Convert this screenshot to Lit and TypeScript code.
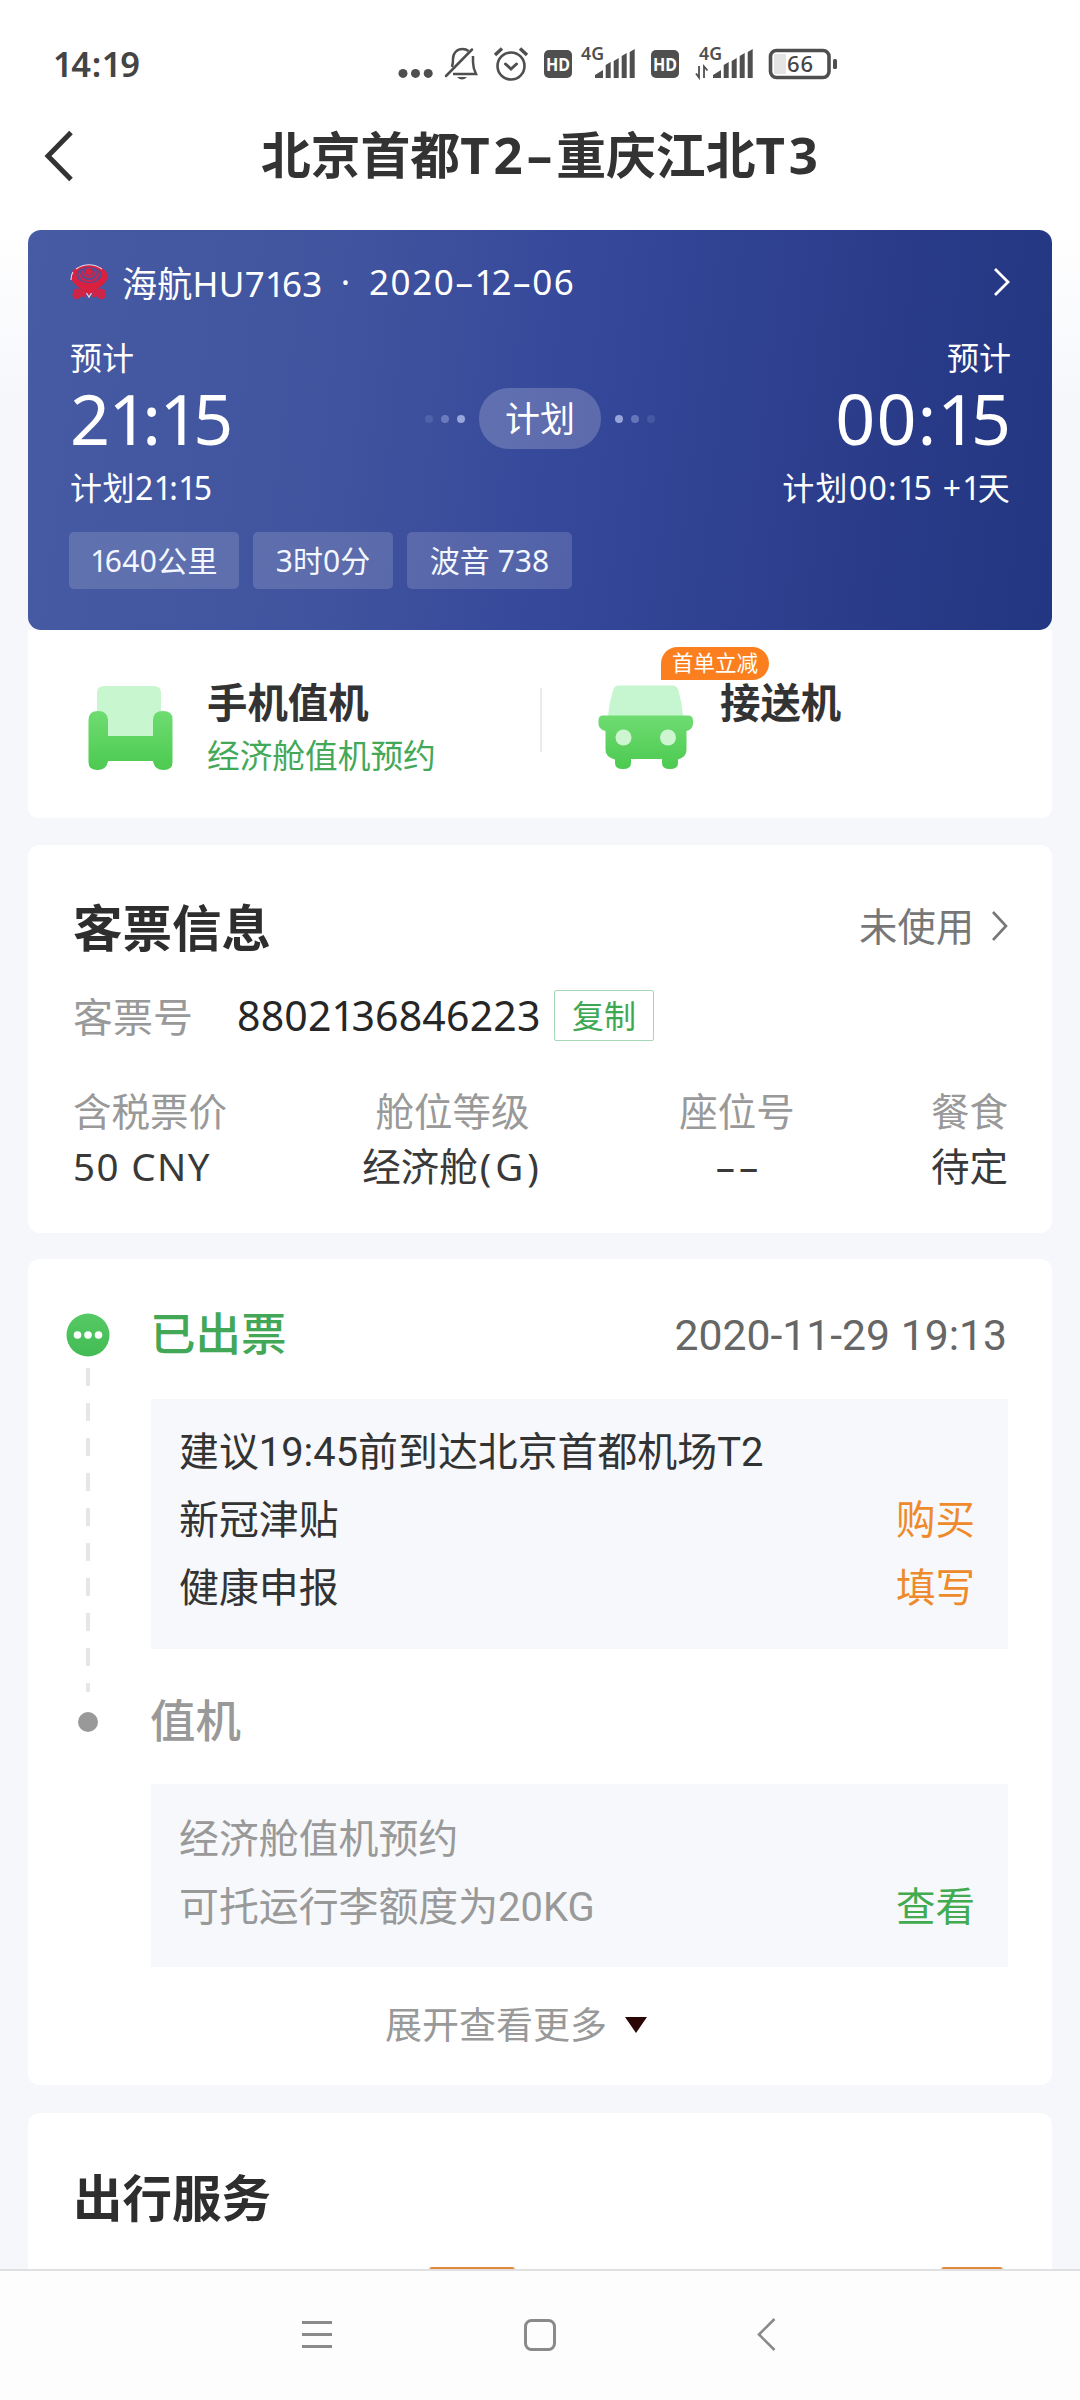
import { LitElement, html, svg, css } from "lit";
import { customElement, property } from "lit/decorators.js";

/** Digits are proportional in this design: the "1" takes less room than the others. */
const num = (text: string) =>
  text.split(/(1)/).filter((s) => s !== "").map((s) => (s === "1" ? html`<span class="one">1</span>` : s));

const shared = css`
  :host {
    display: block;
    box-sizing: border-box;
  }
  *,
  *::before,
  *::after {
    box-sizing: border-box;
  }
  .one {
    letter-spacing: -0.09em;
  }
  svg {
    display: block;
    flex: none;
  }
`;

@customElement("status-bar")
class StatusBar extends LitElement {
  static styles = [
    shared,
    css`
      :host {
        height: 108px;
        padding: 40px 0 0 53px;
        display: flex;
      }
      .time {
        width: 345px;
        font-size: 34.500px;
        line-height: 48px;
        font-weight: 600;
        color: #444;
        letter-spacing: 0.6px;
        white-space: nowrap;
      }
      .time .one {
        letter-spacing: -1.400px;
      }
      .t {
        font-family: "Noto Sans", sans-serif;
      }
    `,
  ];

  private bars(x: number) {
    return svg`<path fill="#4f4f4f" d="M${x} 38v-3l8-5v8zM${x + 10.7} 38V${25}l5-3V38zM${x + 18.7} 38V${21}l5-3V38zM${x + 26.7} 38V${16}l5-3V38zM${x + 34.7} 38V${12}l5-3V38z"/>`;
  }

  private hd(x: number) {
    return svg`<rect x=${x} y="10" width="28" height="28" rx="5" fill="#4f4f4f"/>
      <text class="t" x=${x + 14} y="31" text-anchor="middle" font-size="18" font-weight="700" fill="#fff" textLength="24" lengthAdjust="spacingAndGlyphs">HD</text>`;
  }

  private lte(x: number) {
    return svg`<text class="t" x=${x} y="19.500" font-size="17" font-weight="600" fill="#4f4f4f" textLength="23" lengthAdjust="spacingAndGlyphs">4G</text>`;
  }

  render() {
    return html`<div class="time">${num("14:19")}</div>
      <svg width="450" height="48" viewBox="0 0 450 48">
        <g fill="#4f4f4f"><circle cx="5" cy="33.4" r="4.5" /><circle cx="17.5" cy="33.4" r="4.5" /><circle cx="30.2" cy="33.4" r="4.5" /></g>
        <g fill="none" stroke="#4f4f4f" stroke-width="2.5">
          <path d="M54 27C55 24 55 22 55 19c0-6 4-10 9.500-10 2.500 0 4.500.7 6 2M75 16v6c0 5 1 8 3 12H55" />
          <path d="M48 36L74 9.500" stroke-linecap="round" />
        </g>
        <path fill="#4f4f4f" d="M59 37h10q-5 5-10 0z" />
        <g fill="none" stroke="#4f4f4f" stroke-width="2.600" stroke-linecap="round">
          <circle cx="113" cy="26" r="13.500" />
          <path d="M107.500 24l5.500 5 5.500-5" stroke-width="3" />
          <path d="M97 15l7-6.500M129 15l-7-6.500" stroke-width="3.400" stroke-linecap="butt" />
        </g>
        ${this.hd(146)} ${this.hd(253)} ${this.lte(183)} ${this.lte(301)} ${this.bars(197)} ${this.bars(315)}
        <path d="M301 26v11.500l-3-4M306 38V26.500l3.500 4" fill="none" stroke="#4f4f4f" stroke-width="1.800" />
        <rect x="372.500" y="10.500" width="58.500" height="27" rx="6" fill="#fff" stroke="#4f4f4f" stroke-width="3.600" />
        <rect x="376" y="14" width="12" height="20" fill="#e4e4e4" />
        <rect x="435" y="19" width="4" height="10" rx="1.500" fill="#4f4f4f" />
        <text class="t" x="402" y="32" text-anchor="middle" font-size="22" font-weight="500" fill="#444" textLength="26">66</text>
      </svg>`;
  }
}

@customElement("flight-card")
class FlightCard extends LitElement {
  static styles = [
    shared,
    css`
      :host {
        height: 400px;
        border-radius: 13px;
        padding: 31px 41px 0 41px;
        background: linear-gradient(97deg, #475ba4 0%, #40539e 32%, #36489a 52%, #2b3d8b 78%, #233681 100%);
        color: #fff;
        white-space: nowrap;
      }
      .head {
        display: flex;
        align-items: center;
        height: 43px;
        font-size: 35px;
      }
      .head svg {
        margin-top: -1px;
      }
      .head span {
        margin-top: -2px;
      }
      .head span.one {
        margin-top: 0;
      }
      .code {
        margin-left: 12px;
        width: 200px;
        letter-spacing: 0.3px;
      }
      .sep {
        width: 47px;
        text-align: center;
      }
      .date {
        flex: 1;
        letter-spacing: 1.600px;
      }
      .body {
        display: flex;
        justify-content: space-between;
        margin-top: 32px;
        height: 187px;
      }
      .side {
        width: 300px;
        display: flex;
        flex-direction: column;
        font-size: 32px;
        padding-left: 1px;
      }
      .side.end {
        align-items: flex-end;
        padding-left: 0;
      }
      .sched {
        letter-spacing: 0.5px;
      }
      .end .sched {
        letter-spacing: 1.3px;
      }
      .small {
        line-height: 44px;
      }
      .big {
        font-size: 70px;
        line-height: 72px;
        font-weight: 400;
        letter-spacing: -1.600px;
        margin: 2px 0 12px;
      }
      .end .big {
        letter-spacing: 1px;
        margin-right: -1px;
      }
      .mid {
        display: flex;
        align-items: center;
        gap: 14px;
        height: 61px;
        margin-top: 52px;
      }
      .dots {
        display: flex;
        gap: 8px;
      }
      .dots i {
        width: 8px;
        height: 8px;
        border-radius: 50%;
        background: #b9c6f2;
      }
      .a {
        opacity: 0.15;
      }
      .b {
        opacity: 0.38;
      }
      .c {
        opacity: 0.75;
      }
      .pill {
        width: 122px;
        height: 61px;
        line-height: 61px;
        border-radius: 30px;
        text-align: center;
        font-size: 35px;
        background: rgba(255, 255, 255, 0.2);
      }
      .tags {
        display: flex;
        gap: 14px;
        margin-top: 9px;
      }
      .tag {
        height: 57px;
        line-height: 57px;
        border-radius: 5px;
        text-align: center;
        font-size: 30px;
        background: rgba(255, 255, 255, 0.15);
        color: #f3f7ff;
      }
      .w1 {
        width: 170px;
        letter-spacing: 0.3px;
      }
      .w2 {
        width: 140px;
      }
      .w3 {
        width: 165px;
      }
    `,
  ];

  render() {
    return html`<div class="head">
        <svg width="41" height="38" viewBox="0 0 41 38">
          <path fill="#cf2347" d="M4 27q6-4 12 2l1 5q-3 1-5-1-2 5-8 2 1-2-1-3 2-2 1-5zM36 27q-6-4-12 2l-1 5q3 1 5-1 2 5 8 2-1-2 1-3-2-2-1-5z" />
          <path fill="#d9203f" d="M20 2C10 2 3 6 2 12c-1 9 10 12 18 22C28 24 40 21 38.500 12 37 6 30 2 20 2z" />
          <ellipse cx="20" cy="12" rx="12.500" ry="8" fill="#5a4a90" />
          <path fill="none" stroke="#d0264c" stroke-width="2" d="M10 10q2 8 10 8t10-8M13 8q2 6 7 6t7-6" />
          <path fill="none" stroke="#d5d9ee" stroke-width="1.200" d="M7 6q13-8.500 26 0M2 17q0-5 2-8M17.500 30l2.500 4 2.500-4" />
          <circle cx="20" cy="8.500" r="3.600" fill="#d9203f" />
        </svg>
        <span class="code">海航HU${num("7163")}</span><span class="sep">·</span><span class="date">${num("2020–12–06")}</span>
        <svg width="18" height="30" viewBox="0 0 18 30"><path d="M2 2l13 13L2 28" fill="none" stroke="#fff" stroke-width="2.800" /></svg>
      </div>
      <div class="body">
        <div class="side">
          <div class="small">预计</div>
          <div class="big">${num("21:15")}</div>
          <div class="small sched">计划${num("21:15")}</div>
        </div>
        <div class="mid">
          <div class="dots"><i class="a"></i><i class="b"></i><i class="c"></i></div>
          <div class="pill">计划</div>
          <div class="dots"><i class="c"></i><i class="b"></i><i class="a"></i></div>
        </div>
        <div class="side end">
          <div class="small">预计</div>
          <div class="big">${num("00:15")}</div>
          <div class="small sched">计划${num("00:15 +1")}天</div>
        </div>
      </div>
      <div class="tags">
        <div class="tag w1">${num("1640")}公里</div>
        <div class="tag w2">3时0分</div>
        <div class="tag w3">波音 738</div>
      </div>`;
  }
}

@customElement("quick-actions")
class QuickActions extends LitElement {
  static styles = [
    shared,
    css`
      :host {
        display: grid;
        grid-template-columns: 512px 2px 510px;
        height: 188px;
        background: #fff;
        border-radius: 0 0 10px 10px;
        white-space: nowrap;
      }
      .item {
        display: flex;
        padding: 49px 0 0 58px;
        gap: 33px;
      }
      .car {
        padding-left: 55px;
        gap: 26px;
      }
      .rule {
        height: 64px;
        margin-top: 58px;
        background: #ebebee;
      }
      .text {
        position: relative;
      }
      .title {
        font-size: 40.400px;
        line-height: 48px;
        font-weight: 700;
        color: #333;
      }
      .sub {
        font-size: 32.700px;
        line-height: 40px;
        margin-top: 9px;
        color: #43a858;
      }
      .badge {
        position: absolute;
        left: -59px;
        top: -32px;
        width: 108px;
        height: 33px;
        line-height: 32px;
        font-size: 21.500px;
        text-align: center;
        color: #fff;
        background: #fb7f1e;
        border-radius: 17px 17px 17px 0;
      }
    `,
  ];

  render() {
    return html`<div class="item">
        <svg width="88" height="100" viewBox="0 0 88 100">
          <defs>
            <linearGradient id="g" x1="0" y1="0" x2="0" y2="1"><stop offset="0" stop-color="#6fdc72" /><stop offset="1" stop-color="#4cca50" /></linearGradient>
          </defs>
          <path fill="#c8f6ce" d="M18 7H68q7 0 7 7V62H11V14q0-7 7-7z" />
          <path fill="url(#g)" d="M2.500 41q0-9 9.500-9t10 9V57H67V41q0-9 10-9t9.500 9V83q0 8-9 8-9 0-10.500-9H22q-1.500 9-10.500 9-9 0-9-8z" />
        </svg>
        <div class="text">
          <div class="title">手机值机</div>
          <div class="sub">经济舱值机预约</div>
        </div>
      </div>
      <div class="rule"></div>
      <div class="item car">
        <svg width="97" height="100" viewBox="0 0 97 100">
          <defs>
            <linearGradient id="g" x1="0" y1="0" x2="0.2" y2="1"><stop offset="0" stop-color="#70dc78" /><stop offset="1" stop-color="#4ccc52" /></linearGradient>
          </defs>
          <path fill="#c6f6cf" d="M22 6.500H75q5 0 6.500 5Q85 24 86 37H11Q12 24 16 11.500q1-5 6-5z" />
          <path fill="url(#g)" d="M6 36.500H91q5 0 5 5v3q0 6-6.500 7.500V71q0 7-8.500 9.500V84q0 6-8 6t-8-6V80H34v4q0 6-8 6t-8-6V80.500Q8.500 78 8.500 71V52Q1.500 50.500 1.500 44.500v-3q0-5 4.500-5z" />
          <circle cx="26.500" cy="58.500" r="8" fill="#cdf5d0" /><circle cx="71" cy="58.500" r="8" fill="#cdf5d0" />
        </svg>
        <div class="text">
          <div class="title">接送机</div>
          <div class="badge">首单立减</div>
        </div>
      </div>`;
  }
}

@customElement("ticket-card")
class TicketCard extends LitElement {
  static styles = [
    shared,
    css`
      :host {
        height: 388px;
        background: #fff;
        border-radius: 12px;
        padding: 50px 44px 0 45px;
        white-space: nowrap;
      }
      .head {
        display: flex;
        align-items: center;
        justify-content: space-between;
        height: 66px;
      }
      h2 {
        margin: 0;
        font-size: 49.500px;
        font-weight: 700;
        color: #2e2e2e;
        line-height: 66px;
      }
      .state {
        display: flex;
        align-items: center;
        font-size: 38.300px;
        line-height: 50px;
        color: #777;
        gap: 17px;
        margin-top: -5px;
      }
      .number {
        display: flex;
        align-items: center;
        height: 52px;
        margin-top: 28px;
        font-size: 40px;
      }
      .key {
        width: 164px;
        color: #999;
      }
      .val {
        width: 317px;
        color: #262626;
        letter-spacing: 0.2px;
        font-size: 41px;
      }
      .copy {
        width: 100px;
        height: 51px;
        line-height: 49px;
        border: 1.500px solid #a5d8b4;
        border-radius: 2px;
        text-align: center;
        font-size: 32px;
        color: #3da852;
      }
      .cols {
        display: grid;
        grid-template-columns: 280px 199px 370px 86px;
        margin-top: 43px;
        font-size: 38.500px;
        line-height: 55px;
        color: #393939;
        text-align: center;
      }
      .col:first-child {
        text-align: left;
      }
      .col:last-child {
        text-align: right;
      }
      .label {
        color: #999;
      }
      .lat {
        letter-spacing: 1.400px;
      }
      .paren {
        letter-spacing: 4px;
        margin-left: 2px;
      }
      .dash {
        letter-spacing: 4px;
        padding-left: 4px;
      }
    `,
  ];

  render() {
    return html`<div class="head">
        <h2>客票信息</h2>
        <div class="state">
          未使用<svg width="17" height="32" viewBox="0 0 17 32"><path d="M2 2l13 14L2 30" fill="none" stroke="#777" stroke-width="2.600" /></svg>
        </div>
      </div>
      <div class="number">
        <span class="key">客票号</span><span class="val">${num("8802136846223")}</span><span class="copy">复制</span>
      </div>
      <div class="cols">
        <div class="col"><div class="label">含税票价</div><div class="lat">50 CNY</div></div>
        <div class="col"><div class="label">舱位等级</div><div>经济舱<span class="paren">(G)</span></div></div>
        <div class="col"><div class="label">座位号</div><div class="dash">––</div></div>
        <div class="col"><div class="label">餐食</div><div>待定</div></div>
      </div>`;
  }
}

interface Line {
  text: string;
  action?: string;
}

@customElement("timeline-step")
class TimelineStep extends LitElement {
  @property({ type: Boolean, reflect: true }) done = false;
  @property() heading = "";
  @property() time = "";
  @property({ attribute: false }) lines: Line[] = [];

  static styles = [
    shared,
    css`
      :host {
        display: grid;
        grid-template-columns: 43px 1fr;
        column-gap: 41px;
        font-family: Roboto, "Noto Sans CJK SC", sans-serif;
        white-space: nowrap;
        color: #999;
      }
      .rail {
        display: flex;
        flex-direction: column;
        align-items: center;
      }
      .node {
        display: flex;
        align-items: center;
        height: 59px;
      }
      .line {
        width: 4px;
        flex: 1;
        margin: 4px 0 0;
        background: repeating-linear-gradient(180deg, #e6e6e6 0 18px, transparent 18px 35px);
      }
      .head {
        display: flex;
        justify-content: space-between;
        line-height: 61px;
        height: 60px;
        padding-right: 1px;
      }
      .name {
        font-size: 45.500px;
        font-weight: 500;
      }
      .when {
        font-size: 42.700px;
        color: #666;
      }
      .box {
        background: #f6f8fb;
        padding: 20px 33px 26px 28px;
        margin: 34px 0 0 1px;
      }
      .row {
        display: flex;
        justify-content: space-between;
        font-size: 39.900px;
        line-height: 68px;
      }
      .act {
        color: #43ab4f;
        font-size: 39.500px;
      }
      :host([done]) .name {
        color: #42a757;
      }
      :host([done]) .row {
        color: #333;
      }
      :host([done]) .act {
        color: #ee8a2b;
      }
      :host([done]) {
        padding-bottom: 43px;
      }
      :host([done]) .rail {
        margin-bottom: -43px;
      }
      :host(:not([done])) .box {
        padding: 22px 33px 25px 28px;
        margin-top: 32px;
      }
    `,
  ];

  render() {
    return html`<div class="rail">
        <div class="node">
          ${this.done
            ? html`<svg width="44" height="44" viewBox="0 0 44 44">
                <defs>
                  <linearGradient id="n" x1="0" y1="0" x2="0" y2="1"><stop offset="0" stop-color="#55c964" /><stop offset="1" stop-color="#43bb55" /></linearGradient>
                </defs>
                <circle cx="22" cy="22" r="21.500" fill="url(#n)" />
                <g fill="#fff"><circle cx="11.500" cy="22" r="3.800" /><circle cx="22" cy="22" r="3.800" /><circle cx="32.500" cy="22" r="3.800" /></g>
              </svg>`
            : html`<svg width="20" height="20" viewBox="0 0 20 20"><circle cx="10" cy="10" r="10" fill="#999" /></svg>`}
        </div>
        ${this.done ? html`<div class="line"></div>` : ""}
      </div>
      <div>
        <div class="head"><span class="name">${this.heading}</span><span class="when">${this.time}</span></div>
        <div class="box">
          ${this.lines.map((l) => html`<div class="row"><span>${l.text}</span>${l.action ? html`<span class="act">${l.action}</span>` : ""}</div>`)}
        </div>
      </div>`;
  }
}

@customElement("app-root")
class AppRoot extends LitElement {
  static styles = [
    shared,
    css`
      :host {
        display: flex;
        flex-direction: column;
        width: 1080px;
        height: 2400px;
        overflow: hidden;
        font-family: "Noto Sans", "Noto Sans CJK SC", sans-serif;
        background: linear-gradient(180deg, #fff 0, #fff 230px, #f5f7fb 400px);
      }
      .bar {
        display: grid;
        grid-template-columns: 72px 1fr 72px;
        align-items: center;
        height: 96px;
        margin-bottom: 26px;
      }
      .bar svg {
        margin-left: 43px;
      }
      h1 {
        margin: -3px 0 0;
        padding-left: 3px;
        text-align: center;
        font-size: 49.800px;
        line-height: 70px;
        font-weight: 700;
        color: #333;
        white-space: nowrap;
      }
      .lat {
        font-size: 51px;
        letter-spacing: 4px;
      }
      .page {
        flex: 1;
        min-height: 0;
        overflow: hidden;
        padding: 0 28px;
      }
      ticket-card {
        margin-top: 27px;
      }
      .timeline {
        margin-top: 26px;
        height: 826px;
        border-radius: 12px;
        background: #fff;
        padding: 46px 44px 0 38px;
      }
      .more {
        display: flex;
        align-items: center;
        gap: 18px;
        padding-left: 319px;
        height: 56px;
        margin-top: 28px;
        font-size: 37px;
        color: #999;
      }
      .more svg {
        margin-top: 4px;
      }
      .services {
        margin-top: 28px;
        height: 157px;
        border-radius: 12px 12px 0 0;
        background: #fff;
        padding: 52px 46px 0 45px;
        display: flex;
        flex-direction: column;
        justify-content: space-between;
      }
      h2 {
        margin: 0;
        font-size: 49.500px;
        line-height: 66px;
        font-weight: 700;
        color: #2e2e2e;
      }
      .peeks {
        display: flex;
        justify-content: space-between;
        padding: 0 3px 0 356px;
      }
      .peek {
        width: 86px;
        height: 3px;
        background: #e08a3c;
        border-radius: 3px 3px 0 0;
      }
      .short {
        width: 62px;
      }
      .nav {
        height: 131px;
        border-top: 2px solid #dfe0e2;
        background: #fdfdfd;
        display: flex;
        padding: 46px 0 0 300px;
      }
      .nav svg:nth-child(2) {
        margin: 0 198px 0 188px;
      }
    `,
  ];

  private steps = [
    {
      done: true,
      heading: "已出票",
      time: "2020-11-29 19:13",
      lines: [
        { text: "建议19:45前到达北京首都机场T2" },
        { text: "新冠津贴", action: "购买" },
        { text: "健康申报", action: "填写" },
      ],
    },
    {
      done: false,
      heading: "值机",
      time: "",
      lines: [{ text: "经济舱值机预约" }, { text: "可托运行李额度为20KG", action: "查看" }],
    },
  ];

  render() {
    return html`<status-bar></status-bar>
      <div class="bar">
        <svg width="32" height="54" viewBox="0 0 32 54"><path d="M28 3.500L5 27l23 23.500" fill="none" stroke="#333" stroke-width="5" /></svg>
        <h1>北京首都<span class="lat">T2–</span>重庆江北<span class="lat">T3</span></h1>
      </div>
      <div class="page">
        <flight-card></flight-card>
        <quick-actions></quick-actions>
        <ticket-card></ticket-card>
        <div class="timeline">
          ${this.steps.map((s) => html`<timeline-step ?done=${s.done} .heading=${s.heading} .time=${s.time} .lines=${s.lines}></timeline-step>`)}
          <div class="more">
            展开查看更多<svg width="22" height="16" viewBox="0 0 22 16"><path d="M0 0h22L11 16z" fill="#2a0606" /></svg>
          </div>
        </div>
        <div class="services">
          <h2>出行服务</h2>
          <div class="peeks"><i class="peek"></i><i class="peek short"></i></div>
        </div>
      </div>
      <div class="nav">
        <svg width="34" height="36" viewBox="0 0 34 36"><path d="M2 5.500h30M2 17.500h30M2 29.500h30" stroke="#8a8a8a" stroke-width="2.800" /></svg>
        <svg width="36" height="36" viewBox="0 0 36 36"><rect x="3.500" y="3.500" width="29" height="29" rx="6" fill="none" stroke="#8a8a8a" stroke-width="3" /></svg>
        <svg width="22" height="36" viewBox="0 0 22 36"><path d="M18.500 2L3 17.500 18.500 33" fill="none" stroke="#8a8a8a" stroke-width="2.600" /></svg>
      </div>`;
  }
}
